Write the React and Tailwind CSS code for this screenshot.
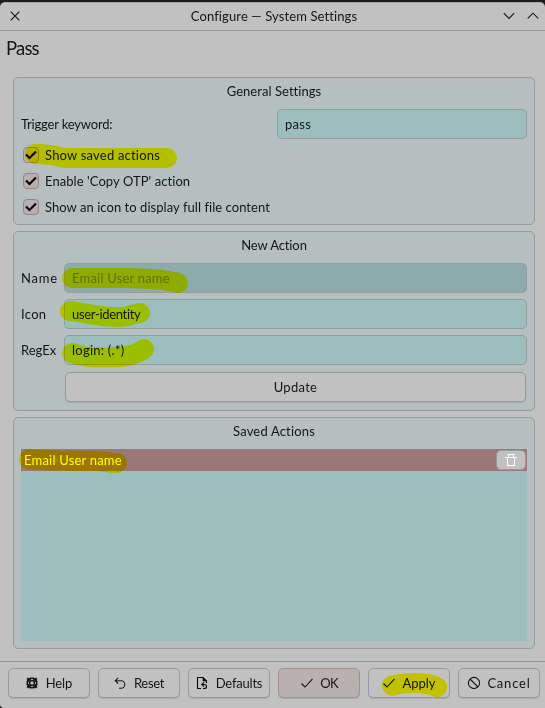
import React from "react";

const line = { fill: "none", stroke: "currentColor", strokeWidth: 1.1 };

function Check() {
  return (
    <svg className="h-3 w-3.5 shrink-0" viewBox="0 0 14 12" {...line}>
      <path d="M1.5 6.5 5 10 12.5 1.8" />
    </svg>
  );
}

function Group({ title, className, titleClass = "", children }) {
  return (
    <section className={`rounded-[5px] border border-[#979b9c] bg-[#b5bfc0] px-[7px] ${className}`}>
      <h2 className={`h-[31px] pt-[3px] text-center leading-5 ${titleClass}`}>{title}</h2>
      {children}
    </section>
  );
}

function CheckRow({ label, className }) {
  return (
    <label className="flex h-[26px] items-center pl-0.5">
      <span className="flex h-4 w-4 items-center justify-center rounded-[4px] border border-[#a08080] bg-[#b7afb0]">
        <svg className="h-2.5 w-3" viewBox="0 0 12 10" fill="none" stroke="#080808" strokeWidth="2.2">
          <path d="M1 4.5 4.5 8 11 1.5" />
        </svg>
      </span>
      <span className={`ml-1.5 ${className}`}>{label}</span>
    </label>
  );
}

function Field({ label, value, labelClass = "", valueClass = "", disabled }) {
  return (
    <div className="flex h-[30px] items-center">
      <span className={`w-[43px] ${labelClass}`}>{label}</span>
      <div className={`flex h-[30px] flex-1 items-center rounded-[5px] border border-[#979b9c] pl-[7px] ${disabled ? "bg-[#8eabab] text-[#5f7273]" : "bg-[#9cbebf]"}`}>
        <span className={valueClass}>{value}</span>
      </div>
    </div>
  );
}

function Button({ icon, label, className = "border-[#9a9a9a] bg-[#c1c1c1]", textClass = "" }) {
  return (
    <button className={`flex h-[30px] w-[82px] items-center justify-center gap-1.5 rounded-[5px] border shadow-[0_1px_0_#aaaaaa] ${className}`}>
      {icon}
      <span className={textClass}>{label}</span>
    </button>
  );
}

const helpIcon = (
  <svg className="h-3 w-3 shrink-0" viewBox="0 0 12 12" fill="none" stroke="#080808">
    <circle cx="6" cy="6" r="4.7" strokeWidth="1.5" />
    <circle cx="6" cy="6" r="2.4" strokeWidth="1.3" />
    <path d="M4.300.5v3M7.700.5v3M4.300 8.500v3M7.700 8.500v3M.5 4.300h3M8.500 4.300h3M.5 7.700h3M8.500 7.700h3" strokeWidth=".9" />
    <path d="M1.300 1.300 3.600 3.600M10.700 1.300 8.400 3.600M1.300 10.700 3.600 8.400M10.700 10.700 8.400 8.400" strokeWidth="2" />
  </svg>
);
const resetIcon = (
  <svg className="h-3 w-3 shrink-0" viewBox="0 0 12 12" {...line}>
    <path d="M4.200.8 1.300 3.700l2.900 2.900M1.300 3.700H7a3.800 3.800 0 0 1 0 7.600H5" />
  </svg>
);
const defaultsIcon = (
  <svg className="h-3.5 w-3 shrink-0" viewBox="0 0 12 14" fill="none" stroke="#080808">
    <path d="M5 12.500H1.500v-11H7L10.500 5v2" strokeWidth="1.100" />
    <path d="M7 1.500V5h3.500z" fill="#080808" strokeWidth=".6" />
    <path d="M8 6.300 5.800 8.500l2.200 2.200M5.800 8.500H8.500a2 2 0 0 1 0 4H7" strokeWidth="1.200" />
  </svg>
);
const cancelIcon = (
  <svg className="h-3.5 w-3.5 shrink-0" viewBox="0 0 14 14" {...line}>
    <circle cx="7" cy="7" r="5.600" />
    <path d="m3 3 8 8" />
  </svg>
);

export default function App() {
  return (
    <div className="relative h-[708px] w-[545px] overflow-hidden bg-[#1b1b1b] pt-0.5 font-['Lato','Liberation_Sans',sans-serif] text-[13px] leading-5 text-[#141616]">
      <main className="flex h-[706px] flex-col rounded-t-[5px] rounded-bl-[4px] border-t border-[#a5a5a5] bg-[#c1c1c1]">
        <header className="flex h-7 items-center border-b border-[#959595] pb-px">
          <svg className="ml-2.5 h-2.5 w-2.5" viewBox="0 0 10 10" {...line}>
            <path d="m.7.700 8.600 8.600M9.300.700.700 9.300" />
          </svg>
          <h1 className="flex-1 pl-[25px] text-center tracking-[0.11px]">Configure — System Settings</h1>
          <svg className="h-2 w-3" viewBox="0 0 12 8" {...line}>
            <path d="m.8 1.200 5.200 5.200 5.200-5.200" />
          </svg>
          <svg className="mr-1.5 ml-3 h-2 w-3" viewBox="0 0 12 8" {...line}>
            <path d="M.8 6.400 6 1.200l5.200 5.200" />
          </svg>
        </header>
        <div className="h-[46px] pt-[5px] pl-1.5 text-[18.5px] leading-6 tracking-[-0.8px]">Pass</div>

        <div className="flex flex-col gap-1.5 pr-2.5 pl-[13px]">
          <Group title="General Settings" className="h-[148px]" titleClass="tracking-[0.05px]">
            <div className="mb-[3px] flex h-[30px] items-center justify-between">
              <span className="tracking-[-0.18px]">Trigger keyword:</span>
              <div className="flex h-[30px] w-[250px] items-center rounded-[5px] border border-[#979b9c] bg-[#9cbebf] pl-[7px] tracking-[0.3px]">pass</div>
            </div>
            <CheckRow label="Show saved actions" className="tracking-[0.2px]" />
            <CheckRow label="Enable 'Copy OTP' action" className="tracking-[0.07px]" />
            <CheckRow label="Show an icon to display full file content" className="tracking-[0.05px]" />
          </Group>

          <Group title="New Action" className="h-[180px]" titleClass="tracking-[-0.1px]">
            <div className="flex flex-col gap-1.5">
              <Field label="Name" value="Email User name" labelClass="tracking-[0.8px]" valueClass="tracking-[0.2px]" disabled />
              <Field label="Icon" value="user-identity" labelClass="tracking-[0.3px]" valueClass="tracking-[-0.32px]" />
              <Field label="RegEx" value="login: (.*)" valueClass="tracking-[0.25px]" />
            </div>
            <button className="mt-[7px] mr-px ml-11 block h-[30px] w-[461px] rounded-[5px] border border-[#979b9c] bg-[#c1c1c1] tracking-[0.3px] shadow-[0_1px_0_#a4aaaa]">
              Update
            </button>
          </Group>

          <Group title="Saved Actions" className="h-[232px]" titleClass="tracking-[0.17px]">
            <div className="h-[192px] bg-[#9cbebf]">
              <div className="flex h-[22px] items-center justify-between bg-[#9b7777] pr-px pl-[3px] text-white">
                <span className="tracking-[0.2px]">Email User name</span>
                <button className="flex h-5 w-[30px] items-center justify-center rounded-[5px] border border-[#979b9c] bg-[#c1c1c1]">
                  <svg className="h-3 w-3" viewBox="0 0 12 12" fill="none" stroke="white" shapeRendering="crispEdges">
                    <path d="M0 3.500h12M2.500 3.500v8h7v-8M3.500 3V.500h5V3" />
                  </svg>
                </button>
              </div>
            </div>
          </Group>
        </div>

        <footer className="mt-3 flex gap-2 border-t border-[#959595] pt-1.5 pl-2">
          <Button icon={helpIcon} label="Help" textClass="pl-0.5 tracking-[-0.1px]" />
          <Button icon={resetIcon} label="Reset" textClass="tracking-[-0.3px] pl-0.5" />
          <Button icon={defaultsIcon} label="Defaults" textClass="tracking-[-0.2px] pl-0.5" />
          <Button icon={<Check />} label="OK" textClass="tracking-[-0.8px]" className="border-[#a68f8f] bg-[#b9b0b0]" />
          <Button icon={<Check />} label="Apply" />
          <Button icon={cancelIcon} label="Cancel" textClass="tracking-[0.8px]" />
        </footer>
      </main>

      {/* Marker strokes laid over the highlighted controls */}
      <svg className="pointer-events-none absolute inset-0 h-[708px] w-[545px] mix-blend-multiply" viewBox="0 0 545 708" fill="none" stroke="#ffff00" strokeWidth="20" strokeLinecap="round" strokeLinejoin="round">
        <path d="M35 154C48 153 56 157 68 158H167" />
        <path d="M72 278H130C150 279 166 279 178 283" />
        <path d="M70 311C83 312 95 317 120 317C130 317 134 313 140 313" />
        <path d="M72 353C84 358 102 358 120 357C134 356 140 352 144 349" />
        <path d="M29 459C50 461 75 461 95 461C103 461 109 463 117 463" />
        <path d="M392 685.500C407 682 425 682 437 687" />
      </svg>
    </div>
  );
}
